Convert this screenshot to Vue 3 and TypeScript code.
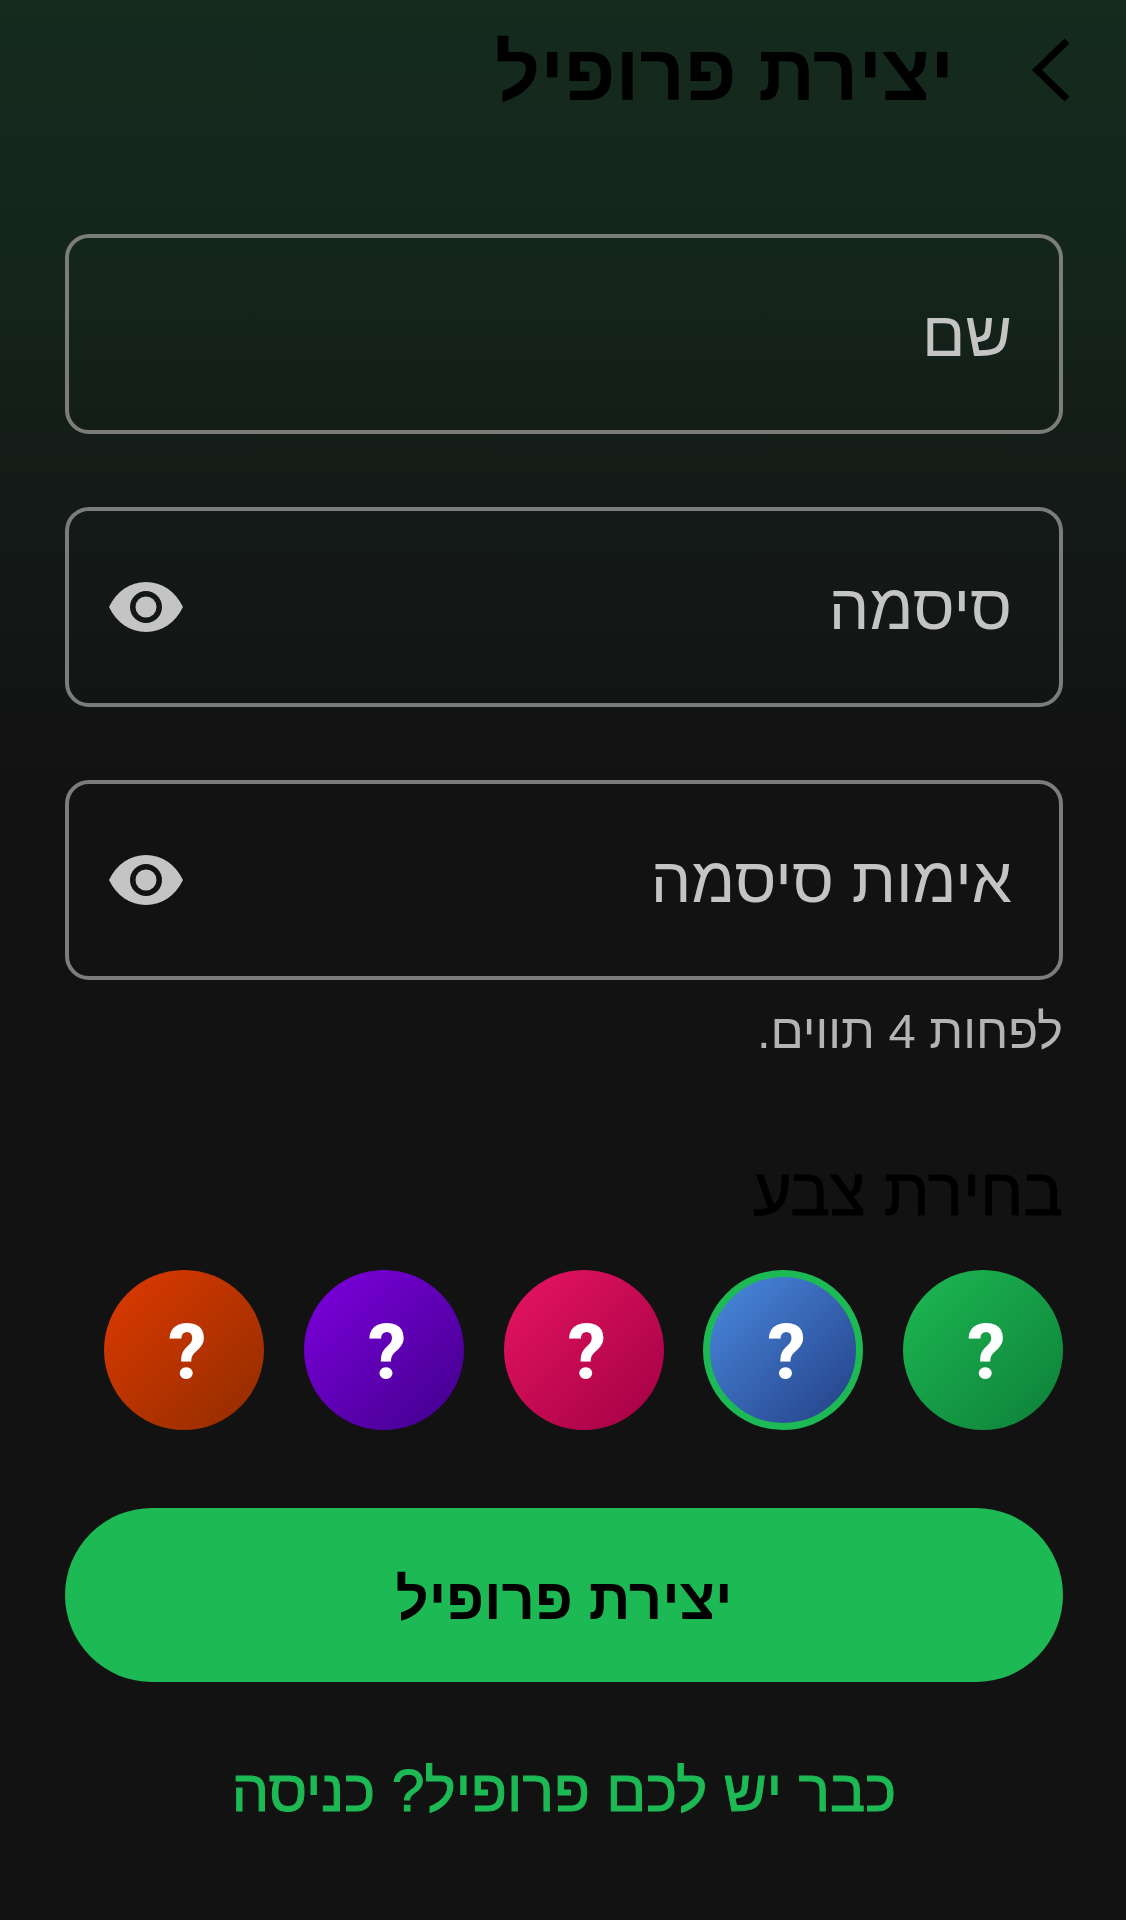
<template>
  <div class="page" dir="rtl">
    <header class="top-bar">
      <button class="back-btn" type="button" aria-label="חזרה">
        <svg width="44" height="66" viewBox="0 0 44 66">
          <path d="M37 4 L7 33 L37 62" fill="none" stroke="#000" stroke-width="7" />
        </svg>
      </button>
      <h1 class="title">יצירת פרופיל</h1>
    </header>

    <form class="form" @submit.prevent>
      <div v-for="field in fields" :key="field.label" class="field">
        <span class="field-label">{{ field.label }}</span>
        <svg v-if="field.secret" class="eye" width="74" height="52" viewBox="0 0 74 52">
          <path
            fill="#c4c4c4"
            fill-rule="evenodd"
            d="M0 26C8 10 21 1 37 1s29 9 37 25c-8 16-21 25-37 25S8 42 0 26ZM37 10a16 16 0 1 0 0 32a16 16 0 0 0 0-32Z"
          />
          <circle cx="37" cy="26" r="10.5" fill="#c4c4c4" />
        </svg>
      </div>
      <p class="hint">לפחות 4 תווים.</p>

      <h2 class="color-title">בחירת צבע</h2>
      <div class="colors">
        <div
          v-for="color in colors"
          :key="color.name"
          class="swatch"
          :class="[color.name, { selected: color.name === selected }]"
        >
          ?
        </div>
      </div>

      <button class="submit" type="submit">יצירת פרופיל</button>
      <a class="login-link" href="#">כבר יש לכם פרופיל? כניסה</a>
    </form>
  </div>
</template>

<script setup lang="ts">
import { ref } from 'vue'

const fields = [
  { label: 'שם', secret: false },
  { label: 'סיסמה', secret: true },
  { label: 'אימות סיסמה', secret: true }
]

const colors = [
  { name: 'green' },
  { name: 'blue' },
  { name: 'pink' },
  { name: 'purple' },
  { name: 'orange' }
]

const selected = ref('blue')
</script>

<style>
html,
body {
  background: #121212;
}
</style>

<style scoped>
.page {
  box-sizing: border-box;
  width: 1126px;
  height: 1920px;
  padding: 0 63px 0 65px;
  background: linear-gradient(180deg, #152b1e 0, #14241b 300px, #141c18 460px, #121212 780px);
  font-family: "Liberation Sans", "DejaVu Sans", sans-serif;
}

.top-bar {
  display: flex;
  align-items: center;
  gap: 76px;
  height: 140px;
  margin: 0 -11px 0 0;
}

.back-btn {
  display: flex;
  padding: 0;
  border: none;
  background: none;
}

.title {
  margin: 6px 0 0;
  font-size: 79px;
  font-weight: 700;
  color: #000;
}

.form {
  display: flex;
  flex-direction: column;
  padding-top: 94px;
}

.field {
  box-sizing: border-box;
  display: flex;
  align-items: center;
  justify-content: space-between;
  height: 200px;
  margin-bottom: 73px;
  padding: 0 47px 0 40px;
  border: 4px solid #7b7d7b;
  border-radius: 24px;
}

.field:nth-child(3) {
  margin-bottom: 0;
}

.field-label {
  font-size: 64px;
  color: #c4c4c4;
}

.hint {
  margin: 26px 0 0;
  font-size: 49px;
  line-height: 50px;
  color: #b4b4b4;
}

.color-title {
  margin: 101px 0 0;
  font-size: 66px;
  line-height: 70px;
  font-weight: 400;
  -webkit-text-stroke: 1px #000;
  color: #000;
}

.colors {
  display: flex;
  justify-content: space-between;
  margin: 43px 0 78px;
  padding-left: 39px;
}

.swatch {
  box-sizing: border-box;
  display: flex;
  align-items: center;
  justify-content: center;
  width: 160px;
  height: 160px;
  padding: 3px 0 0 7px;
  border-radius: 50%;
  font-family: Roboto, sans-serif;
  font-size: 76px;
  font-weight: 800;
  color: #fff;
}

.green {
  background: linear-gradient(135deg, #1db954, #0e7f38);
}

.blue {
  background: linear-gradient(135deg, #4a8ae0, #233f85);
}

.pink {
  background: linear-gradient(135deg, #e91560, #a00045);
}

.purple {
  background: linear-gradient(135deg, #7f00e0, #40008a);
}

.orange {
  background: linear-gradient(135deg, #e03a00, #8f2c00);
}

.selected {
  border: 7px solid #1db954;
}

.submit {
  height: 174px;
  padding: 7px 0 0;
  border: none;
  border-radius: 87px;
  background: #1db954;
  font-family: inherit;
  font-size: 58px;
  font-weight: 700;
  color: #000;
}

.login-link {
  margin-top: 74px;
  font-size: 59px;
  line-height: 70px;
  font-weight: 400;
  -webkit-text-stroke: 1px #1db954;
  text-align: center;
  text-decoration: none;
  color: #1db954;
}
</style>
